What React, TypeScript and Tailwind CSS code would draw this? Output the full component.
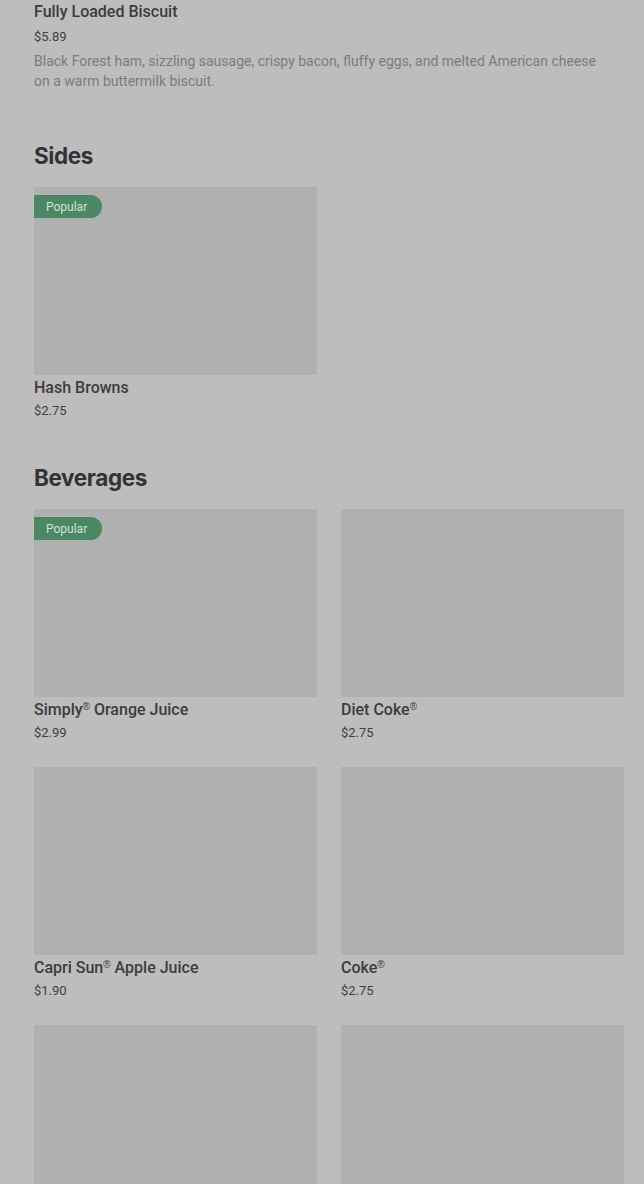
import React from 'react';

interface MenuItem {
  name: string;
  price: string;
  popular?: boolean;
}

const sides: MenuItem[] = [{ name: 'Hash Browns', price: '$2.75', popular: true }];

const beverages: MenuItem[] = [
  { name: 'Simply® Orange Juice', price: '$2.99', popular: true },
  { name: 'Diet Coke®', price: '$2.75' },
  { name: 'Capri Sun® Apple Juice', price: '$1.90' },
  { name: 'Coke®', price: '$2.75' },
  { name: '', price: '' },
  { name: '', price: '' },
];

// render ® as a small raised mark like the original menu
const ItemName: React.FC<{ name: string }> = ({ name }) => {
  const parts = name.split('®');
  return (
    <>
      {parts.map((part, i) => (
        <React.Fragment key={i}>
          {part}
          {i < parts.length - 1 && (
            <span className="relative -top-[5px] text-[10px] leading-none" style={{ fontFamily: '"Liberation Sans", sans-serif' }}>
              {'\u00AE\uFE0E'}
            </span>
          )}
        </React.Fragment>
      ))}
    </>
  );
};

const ItemCard: React.FC<{ item: MenuItem }> = ({ item }) => (
  <div className="flex flex-col">
    <div className="relative h-[188px] w-full bg-[#b0b0b0]">
      {item.popular && (
        <span className="absolute left-0 top-[8px] flex h-[23px] w-[68px] items-center rounded-r-full bg-[#4a8763] pl-[12px] text-[12px] text-[#d3e3d9]">
          Popular
        </span>
      )}
    </div>
    {item.name && (
      <>
        <div className="mt-[1px] h-[24px] text-[16px] leading-[24px] font-medium text-[#3c3c3c]">
          <ItemName name={item.name} />
        </div>
        <div className="mt-[2px] text-[13px] leading-[18px] text-[#3f3f3f]">{item.price}</div>
      </>
    )}
  </div>
);

const Section: React.FC<{ title: string; items: MenuItem[]; className: string }> = ({ title, items, className }) => (
  <section className={className}>
    <h2 className="text-[22.5px] leading-[32px] font-bold tracking-[-0.4px] text-[#333333]" style={{ fontFamily: 'Inter, sans-serif' }}>
      {title}
    </h2>
    <div className="mt-[15px] grid grid-cols-2 gap-x-[24px] gap-y-[25px]">
      {items.map((item, index) => (
        <ItemCard key={index} item={item} />
      ))}
    </div>
  </section>
);

export default function App() {
  return (
    <div className="min-h-[1184px] overflow-hidden bg-[#bdbdbd] pl-[34px] pr-[20px]" style={{ fontFamily: 'Roboto, "Liberation Sans", sans-serif' }}>
      <div className="flex flex-col">
        <div className="text-[16px] leading-[24px] font-medium text-[#3c3c3c]">Fully Loaded Biscuit</div>
        <div className="mt-[4px] text-[13px] leading-[18px] text-[#3f3f3f]">$5.89</div>
        <p className="mt-[5px] pr-[20px] text-[14px] leading-[20px] text-[#7b7b7b]">
          Black Forest ham, sizzling sausage, crispy bacon, fluffy eggs, and melted American cheese on a warm buttermilk biscuit.
        </p>
      </div>
      <Section title="Sides" items={sides} className="mt-[49px]" />
      <Section title="Beverages" items={beverages} className="mt-[42px]" />
    </div>
  );
}
